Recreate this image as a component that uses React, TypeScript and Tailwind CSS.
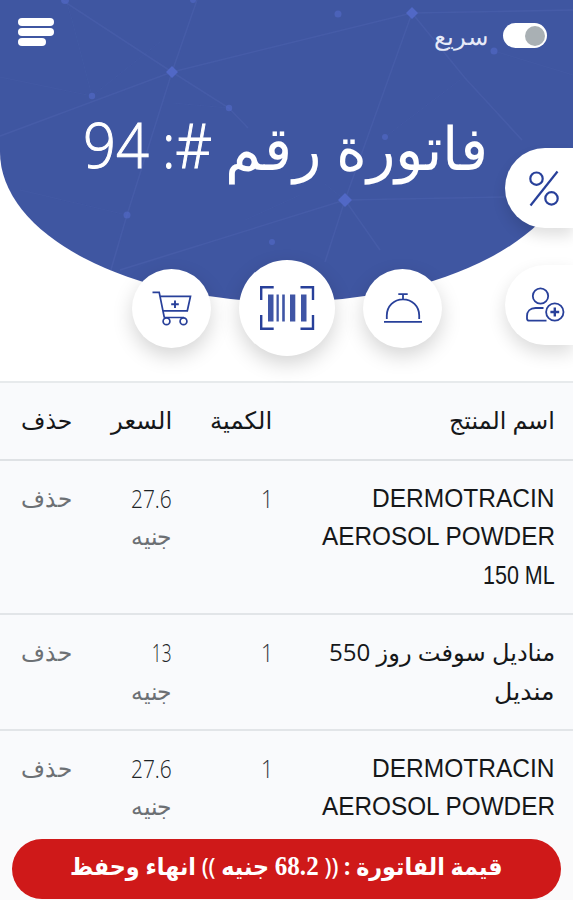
import { useLayoutEffect, useRef, useState, type ReactNode } from "react";

type FitProps = { width: number; className?: string; ltr?: boolean; children: ReactNode };

/** Keeps one line of text at a fixed width, whichever font the device offers. */
function Fit({ width, className = "", ltr = false, children }: FitProps) {
  const ref = useRef<HTMLSpanElement>(null);
  const [scale, setScale] = useState(1);
  useLayoutEffect(() => {
    if (ref.current) setScale(width / ref.current.offsetWidth);
  }, [width]);
  return (
    <span className={`flex justify-start whitespace-nowrap ${className}`} style={{ width }}>
      <span
        ref={ref}
        dir={ltr ? "ltr" : "rtl"}
        className="block shrink-0 origin-right"
        style={{ transform: `scaleX(${scale})` }}
      >
        {children}
      </span>
    </span>
  );
}

function Network() {
  return (
    <svg className="absolute inset-0" width="573" height="302" viewBox="0 0 573 302" fill="none">
      <g stroke="#5468b4" strokeWidth="1.5" opacity="0.35">
        <path d="M62 0 172 72 229 108 248 128M197 0 172 72 127 215 105 290M0 136 172 72 412 13 573 10" />
        <path d="M412 13 345 200 325 262M412 13 465 78 522 140M345 200 505 197M345 200 120 270M345 200 380 250" />
      </g>
      <g stroke="#5468b4" opacity="0.18">
        <path d="M0 77 92 96 72 20 66 0M92 96 160 42M229 108 172 103M20 190 127 215M345 200 325 184M385 137 460 80M494 51 573 75M245 220 300 195" />
      </g>
      <g fill="#5269c6">
        <path d="m172 66 6 6-6 6-6-6zM412 7l6 6-6 6-6-6zM345 193l7 7-7 7-7-7z" />
        <g opacity="0.65">
          <circle cx="92" cy="96" r="3.2" />
          <circle cx="229" cy="108" r="3.2" />
          <circle cx="127" cy="215" r="3.5" />
          <circle cx="338" cy="14" r="3.5" />
          <circle cx="494" cy="51" r="3.5" />
          <circle cx="385" cy="137" r="3" />
          <circle cx="272" cy="242" r="3" />
          <circle cx="65" cy="0" r="4" />
          <circle cx="193" cy="0" r="3" />
        </g>
      </g>
    </svg>
  );
}

function CartIcon() {
  return (
    <svg width="40" height="36" viewBox="0 0 40 36" fill="none" stroke="#28409a" strokeWidth="1.7">
      <path d="M0.5 2.3H7.2L12.3 27.5M8.3 6.3H38.5L35.3 20.8H11.2M12.3 27.5H32" />
      <path d="M23 10.5v7.6M19.2 14.3h7.6" strokeWidth="1.9" />
      <circle cx="14.5" cy="31.2" r="3.4" />
      <circle cx="31.5" cy="31.2" r="3.4" />
    </svg>
  );
}

function BarcodeIcon() {
  return (
    <svg width="56" height="46" viewBox="0 0 56 46" fill="none" stroke="#28409a" strokeWidth="2.4">
      <path d="M2.2 15V2.2h12.5M41.5 2.2H54V15M2.2 30v13.8h12.5M41.5 43.8H54V30" />
      <g fill="#3f55a5" stroke="none">
        <path d="M9 9.5h5.5v27H9zM17.5 9.5h2.3v27h-2.3zM23.2 9.5h2.6v27h-2.6zM31 9.5h5.3v27H31zM42 9.5h5.5v27H42z" />
      </g>
    </svg>
  );
}

function BellIcon() {
  return (
    <svg width="40" height="32" viewBox="0 0 40 32" fill="none" stroke="#28409a" strokeWidth="1.8">
      <path d="M1 29.8H39M3.8 27V23.5C3.8 14 11 7.3 20 7.3S36.2 14 36.2 23.5V27M20 7V2.2M15.3 2.2H24.7" />
    </svg>
  );
}

function PercentIcon() {
  return (
    <svg width="32" height="37" viewBox="0 0 32 37" fill="none" stroke="#28409a" strokeWidth="2.2">
      <circle cx="8.5" cy="8.7" r="6.2" />
      <circle cx="23.5" cy="28.4" r="6.2" />
      <path d="M29.5 1.5 2.5 35.5" />
    </svg>
  );
}

function AddUserIcon() {
  return (
    <svg width="40" height="36" viewBox="0 0 40 36" fill="none" stroke="#28409a" strokeWidth="1.8">
      <circle cx="15.5" cy="9" r="7.7" />
      <path d="M18.5 21H10.5C5 21 2 24.5 2 29V31.5Q2 33.7 4.2 33.7H21.5" />
      <circle cx="29.8" cy="25" r="8.7" />
      <path d="M29.8 20.6v8.8M25.4 25h8.8" strokeWidth="2.4" />
    </svg>
  );
}

type Line = { text: string; width: number; latin?: boolean };
type Item = { name: Line[]; price: string; priceWidth: number };

const dermotracin: Line[] = [
  { text: "DERMOTRACIN", width: 183, latin: true },
  { text: "AEROSOL POWDER", width: 233, latin: true },
  { text: "150 ML", width: 72, latin: true },
];

const items: Item[] = [
  { name: dermotracin, price: "27.6", priceWidth: 41 },
  {
    name: [
      { text: "مناديل سوفت روز 550", width: 226 },
      { text: "منديل", width: 61 },
    ],
    price: "13",
    priceWidth: 20,
  },
  { name: dermotracin, price: "27.6", priceWidth: 41 },
];

const columns = "grid grid-cols-[283px_100px_100px_72px] pr-[18px]";

export default function App() {
  return (
    <div
      dir="rtl"
      className="relative h-[900px] w-[573px] overflow-hidden bg-white font-['Open_Sans','DejaVu_Sans',sans-serif]"
    >
      <header className="relative h-[302px] overflow-hidden rounded-b-[50%_150px] bg-[#4056a1] text-white">
        <Network />
        <div className="relative flex items-start justify-between pr-[26px] pl-[18px]">
          <div className="flex pt-[17px]">
            <div className="mt-[6px] flex h-[25px] w-[44px] items-center rounded-full bg-white pr-[2px]">
              <span className="size-[20px] rounded-full bg-[#a9b0b4]" />
            </div>
            <Fit width={54} className="mr-[15px] text-[24px] leading-[38px] font-light text-[#e6eaf8]">سريع</Fit>
          </div>
          <div className="flex flex-col items-end gap-[2px] pt-[18px]">
            <span className="h-2 w-9 rounded-full bg-white" />
            <span className="h-2 w-9 rounded-full bg-white" />
            <span className="h-2 w-7 rounded-full bg-white" />
          </div>
        </div>
        <h1 className="relative mt-[54px] flex pr-[84px] text-[60px] leading-[76px] font-light">
          <Fit width={264}>فاتورة رقم</Fit>
          <Fit width={50} className="mr-[13px] leading-[73px] [-webkit-text-stroke:1px_white]">#:</Fit>
          <Fit width={66} className="mr-[13px] text-[62px] leading-[70px] [-webkit-text-stroke:1px_white]">94</Fit>
        </h1>
      </header>

      <button className="absolute top-[148px] right-0 flex h-[80px] w-[68px] items-center rounded-l-full bg-white pr-[13px] shadow-[0_8px_14px_rgba(0,0,0,0.12)]">
        <PercentIcon />
      </button>
      <button className="absolute top-[265px] right-0 flex h-[80px] w-[68px] items-center rounded-l-full bg-white pr-[8px] shadow-[0_8px_18px_rgba(0,0,0,0.14)]">
        <AddUserIcon />
      </button>

      <nav className="relative -mt-[42px] flex h-[96px] items-center gap-[28px] pr-[131px]">
        <button className="flex size-[79px] items-center justify-center rounded-full bg-white shadow-[0_8px_20px_rgba(0,0,0,0.17)]">
          <BellIcon />
        </button>
        <button className="flex size-[96px] items-center justify-center rounded-full bg-white shadow-[0_8px_20px_rgba(0,0,0,0.17)]">
          <BarcodeIcon />
        </button>
        <button className="flex size-[79px] items-center justify-center rounded-full bg-white shadow-[0_8px_20px_rgba(0,0,0,0.17)]">
          <CartIcon />
        </button>
      </nav>

      <main className="mt-[25px] h-[600px] bg-[#f9fafc] text-[24px] leading-[38.4px] text-[#151719]">
        <div className={`${columns} h-[80px] border-t-2 border-b-2 border-t-[#e7eaec] border-b-[#dfe2e5] pt-[18px]`}>
          <Fit width={106}>اسم المنتج</Fit>
          <Fit width={62}>الكمية</Fit>
          <Fit width={61}>السعر</Fit>
          <Fit width={51}>حذف</Fit>
        </div>
        {items.map((item, index) => (
          <div key={index} className={`${columns} border-b-2 border-[#e2e5e8] pt-[18px] pb-[19px]`}>
            <div>
              {item.name.map((line) => (
                <Fit
                  key={line.text}
                  width={line.width}
                  ltr={line.latin}
                  className={line.latin ? "font-['Liberation_Sans',sans-serif] text-[26px]" : ""}
                >
                  {line.text}
                </Fit>
              ))}
            </div>
            <Fit width={12} className="-mr-px text-[25px] font-light text-[#303437]">1</Fit>
            <div className="font-light text-[#6c7074]">
              <Fit width={item.priceWidth} className="text-[25px] text-[#202326]">{item.price}</Fit>
              <Fit width={41}>جنيه</Fit>
            </div>
            <Fit width={51} className="font-light text-[#6c7074]">حذف</Fit>
          </div>
        ))}
      </main>

      <footer className="absolute inset-x-0 bottom-0 bg-[#fafafb] px-[12px] pt-[9px] pb-px">
        <button className="flex h-[60px] w-full justify-center rounded-full bg-[#cf1919] pt-[7px] text-[24px] leading-[40px] font-bold text-white">
          <Fit width={433} className="font-['Noto_Sans','DejaVu_Sans',sans-serif]">
            قيمة الفاتورة : <span className="font-medium">((</span>{" "}
            <span className="font-['Liberation_Serif',serif] text-[27px]">68.2</span> جنيه{" "}
            <span className="font-medium">))</span> انهاء وحفظ
          </Fit>
        </button>
      </footer>
    </div>
  );
}
